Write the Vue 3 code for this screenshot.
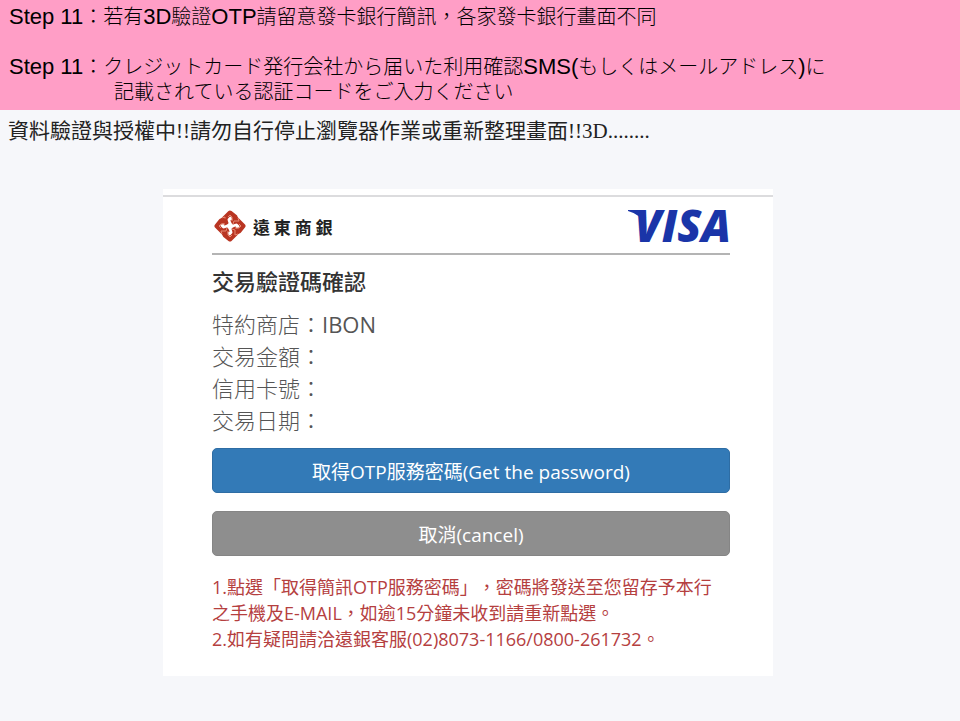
<script setup>
import { ref } from 'vue'

const steps = [
    {
        lang: 'zh-Hant',
        lines: [
            [
                { t: 'Step 11', latin: true },
                { t: '：若有' },
                { t: '3D', latin: true },
                { t: '驗證' },
                { t: 'OTP', latin: true },
                { t: '請留意發卡銀行簡訊，各家發卡銀行畫面不同' }
            ]
        ]
    },
    {
        lang: 'ja',
        lines: [
            [
                { t: 'Step 11', latin: true },
                { t: '：クレジットカード発行会社から届いた利用確認' },
                { t: 'SMS(', latin: true },
                { t: 'もしくはメールアドレス' },
                { t: ')', latin: true },
                { t: 'に' }
            ],
            [{ t: '記載されている認証コードをご入力ください' }]
        ]
    }
]

const details = ref([
    { label: '特約商店', value: 'IBON' },
    { label: '交易金額', value: '' },
    { label: '信用卡號', value: '' },
    { label: '交易日期', value: '' }
])
</script>

<template>
    <header class="steps">
        <div v-for="(step, i) in steps" :key="i" class="step" :lang="step.lang">
            <p v-for="(line, j) in step.lines" :key="j" :class="{ indent: j > 0 }">
                <span v-for="(part, k) in line" :key="k" :class="{ latin: part.latin }">{{ part.t }}</span>
            </p>
        </div>
    </header>

    <main>
        <p class="status">資料驗證與授權中!!請勿自行停止瀏覽器作業或重新整理畫面!!3D........</p>

        <section class="card">
            <div class="brands">
                <div class="bank">
                    <svg class="knot" viewBox="-16 -16 32 32" aria-hidden="true">
                        <g v-for="a in [0, 90, 180, 270]" :key="a" :transform="`rotate(${a})`">
                            <path class="band" d="M-9 -4L-5 -8L0 -13L5 -9V-5L1 -3" />
                            <path class="band" d="M-5 -3V-9" />
                            <path class="thread" d="M-8 -8L-5 -9V-4L-2 -3" />
                            <path class="thread" d="M-2 -9L0 -11L2 -9V-5" />
                        </g>
                        <path class="star" d="M0 -6L2 -2L6 0L2 2L0 6L-2 2L-6 0L-2 -2Z" />
                    </svg>
                    <span class="bank-name">遠 東 商 銀</span>
                </div>
                <svg class="visa" viewBox="0 0 104 36" role="img" aria-label="VISA">
                    <path d="M2 2H18V16Q14 6 2 3Z" />
                    <text x="105" y="34" text-anchor="end">VISA</text>
                </svg>
            </div>

            <h1>交易驗證碼確認</h1>
            <dl>
                <div v-for="row in details" :key="row.label" class="row">
                    <dt>{{ row.label }}：</dt>
                    <dd>{{ row.value }}</dd>
                </div>
            </dl>

            <div class="actions">
                <button type="button" class="primary">取得OTP服務密碼(Get the password)</button>
                <button type="button" class="cancel">取消(cancel)</button>
            </div>

            <div class="notes">
                <p>1.點選「取得簡訊OTP服務密碼」，密碼將發送至您留存予本行之手機及E-MAIL，如逾15分鐘未收到請重新點選。</p>
                <p>2.如有疑問請洽遠銀客服(02)8073-1166/0800-261732。</p>
            </div>
        </section>
    </main>
</template>

<style>
body {
    margin: 0;
    background-color: #f6f7fa;
}
</style>

<style scoped>
p, h1, dl, dd {
    margin: 0;
}

.steps {
    display: flex;
    flex-direction: column;
    gap: 25px;
    padding: 5px 9px;
    background-color: #ff9ec6;
    color: #000;
    font-family: "Liberation Sans", "Noto Sans CJK TC", sans-serif;
    font-size: 20px;
    font-weight: 300;
    line-height: 25px;
}
.step:lang(ja) {
    font-family: "Liberation Sans", "Noto Sans CJK JP", sans-serif;
}
.latin {
    font-size: 22px;
    line-height: 20px;
}
.indent {
    padding-left: 105px;
}

.status {
    padding: 8px;
    font-family: "Liberation Serif", "Noto Sans CJK TC", serif;
    font-size: 21px;
    line-height: 26px;
    color: #222;
}

.card {
    margin: 37px 187px 45px 163px;
    padding: 6px 43px 24px 49px;
    background: linear-gradient(#fff 6px, #dcdcde 6px, #dcdcde 8px, #fff 8px);
    font-family: "Open Sans", "Noto Sans CJK TC", sans-serif;
    color: #555;
}
.brands {
    display: flex;
    justify-content: space-between;
    align-items: center;
    height: 54px;
    padding-top: 4px;
    border-bottom: 2px solid #b4b4b4;
}
.bank {
    display: flex;
    align-items: center;
    gap: 7px;
    padding-left: 2px;
}
.knot {
    width: 32px;
    height: 32px;
}
.band {
    fill: none;
    stroke: #b93522;
    stroke-width: 5;
    stroke-linejoin: round;
}
.thread {
    fill: none;
    stroke: #e58a74;
    stroke-width: 1;
}
.star {
    fill: #fff;
}
.bank-name {
    font-family: "Noto Sans CJK TC", sans-serif;
    font-size: 17px;
    font-weight: 700;
    color: #222;
}
.visa {
    width: 104px;
    height: 36px;
    fill: #1a35a8;
    overflow: visible;
}
.visa text {
    font-family: "Open Sans", sans-serif;
    font-size: 44px;
    font-style: italic;
    font-weight: 800;
}

h1 {
    padding: 10px 0 11px;
    font-size: 22px;
    font-weight: 500;
    line-height: 32px;
    color: #333;
}
.row {
    display: flex;
    font-size: 22px;
    font-weight: 300;
    line-height: 32px;
}
dd {
    font-weight: 400;
}

.actions {
    display: flex;
    flex-direction: column;
    gap: 18px;
    padding: 12px 0 18px;
}
button {
    height: 45px;
    border: 1px solid #2e6da4;
    border-radius: 5px;
    background-color: #337ab7;
    color: #fff;
    font-family: inherit;
    font-size: 19px;
    cursor: pointer;
}
.cancel {
    border-color: #858585;
    background-color: #8e8e8e;
}

.notes {
    padding-right: 8px;
    font-size: 18px;
    line-height: 26px;
    color: #b5403f;
    text-spacing-trim: space-all;
}
</style>
